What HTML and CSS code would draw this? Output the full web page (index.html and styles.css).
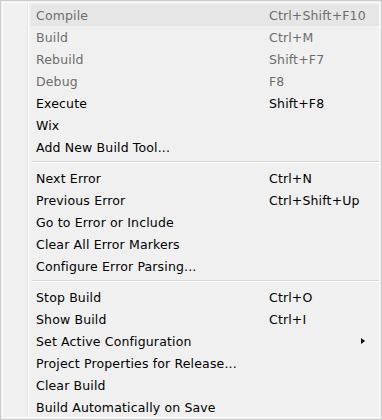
FILE: index.html
```html
<!DOCTYPE html>
<html>
<head>
<meta charset="utf-8">
<link rel="stylesheet" href="styles.css">
</head>
<body>
<div class="menu">
  <div class="item disabled hover"><span class="label">Compile</span><span class="key">Ctrl+Shift+F10</span></div>
  <div class="item disabled"><span class="label">Build</span><span class="key">Ctrl+M</span></div>
  <div class="item disabled"><span class="label">Rebuild</span><span class="key">Shift+F7</span></div>
  <div class="item disabled"><span class="label">Debug</span><span class="key">F8</span></div>
  <div class="item"><span class="label">Execute</span><span class="key">Shift+F8</span></div>
  <div class="item"><span class="label">Wix</span><span class="key"></span></div>
  <div class="item"><span class="label">Add New Build Tool...</span><span class="key"></span></div>
  <div class="sep"></div>
  <div class="item"><span class="label">Next Error</span><span class="key">Ctrl+N</span></div>
  <div class="item"><span class="label">Previous Error</span><span class="key">Ctrl+Shift+Up</span></div>
  <div class="item"><span class="label">Go to Error or Include</span><span class="key"></span></div>
  <div class="item"><span class="label">Clear All Error Markers</span><span class="key"></span></div>
  <div class="item"><span class="label">Configure Error Parsing...</span><span class="key"></span></div>
  <div class="sep"></div>
  <div class="item"><span class="label">Stop Build</span><span class="key">Ctrl+O</span></div>
  <div class="item"><span class="label">Show Build</span><span class="key">Ctrl+I</span></div>
  <div class="item sub"><span class="label">Set Active Configuration</span><span class="key"></span><span class="arrow"></span></div>
  <div class="item"><span class="label">Project Properties for Release...</span><span class="key"></span></div>
  <div class="item"><span class="label">Clear Build</span><span class="key"></span></div>
  <div class="item"><span class="label">Build Automatically on Save</span><span class="key"></span></div>
</div>
</body>
</html>
```
FILE: styles.css
```css
html, body {
  margin: 0;
  padding: 0;
  background: #f0f0f0;
}
.menu {
  width: 382px;
  height: 420px;
  box-sizing: border-box;
  border: 1px solid #cccccc;
  padding: 3px 2px 1px 2px;
  background: linear-gradient(to right, #f1f1f1 0, #f1f1f1 26px, #e2e3e3 26px, #e2e3e3 27px, #ffffff 27px, #ffffff 28px, #f0f0f0 28px);
  background-clip: content-box;
  box-shadow: inset 0 0 0 1px #f0f0f0, inset 0 0 0 2px #fafafa;
  font-family: "DejaVu Sans", Verdana, sans-serif;
  font-size: 12.5px;
  letter-spacing: 0.15px;
  color: #000;
}
.item {
  display: flex;
  align-items: center;
  height: 22px;
  margin-left: 28px;
  position: relative;
}
.item.hover {
  background: #e6e6e6;
}
.item.disabled {
  color: #6d6d6d;
}
.label {
  width: 233px;
  padding-left: 5px;
  white-space: nowrap;
}
.key {
  white-space: nowrap;
}
.arrow {
  position: absolute;
  right: 14px;
  top: 8px;
  width: 0;
  height: 0;
  border-top: 3.5px solid transparent;
  border-bottom: 3.5px solid transparent;
  border-left: 4px solid #000;
}
.sep {
  height: 9px;
  margin-left: 29px;
  position: relative;
}
.sep::before {
  content: "";
  position: absolute;
  left: 0;
  right: 0;
  top: 3px;
  height: 1px;
  background: #d7d7d7;
  border-bottom: 1px solid #ffffff;
}
```
